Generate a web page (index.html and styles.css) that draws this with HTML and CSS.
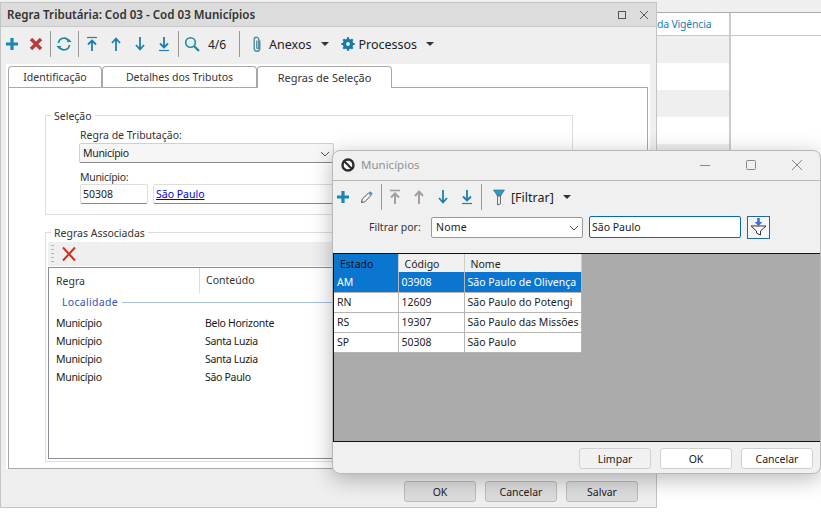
FILE: index.html
```html
<!DOCTYPE html>
<html lang="pt">
<head>
<meta charset="utf-8">
<title>Regra Tributária</title>
<link rel="stylesheet" href="styles.css">
</head>
<body>
<svg class="defs" width="0" height="0">
  <symbol id="i-plus" viewBox="0 0 14 14"><path d="M7 1v12M1 7h12" stroke="#1a86b8" stroke-width="3.200" fill="none"/></symbol>
  <symbol id="i-x" viewBox="0 0 14 14"><path d="M2 2l10 10M12 2L2 12" stroke="#b83a3a" stroke-width="3.400" fill="none"/></symbol>
  <symbol id="i-up" viewBox="0 0 14 16"><path d="M7 15V3M3 7l4-4.500 4 4.500" stroke="#1c7fae" stroke-width="1.800" fill="none"/></symbol>
  <symbol id="i-down" viewBox="0 0 14 16"><path d="M7 1v12M3 9l4 4.500 4-4.500" stroke="#1c7fae" stroke-width="1.800" fill="none"/></symbol>
  <symbol id="i-top" viewBox="0 0 14 16"><path d="M2 1.500h10" stroke="#1c7fae" stroke-width="1.200"/><path d="M7 15V5M3 8.500l4-4 4 4" stroke="#1c7fae" stroke-width="1.800" fill="none"/></symbol>
  <symbol id="i-bottom" viewBox="0 0 14 16"><path d="M2 14.500h10" stroke="#1c7fae" stroke-width="1.200"/><path d="M7 1v10M3 7.500l4 4 4-4" stroke="#1c7fae" stroke-width="1.800" fill="none"/></symbol>
  <symbol id="i-top-off" viewBox="0 0 14 16"><path d="M2 1.500h10" stroke="#a0a0a0" stroke-width="1.600"/><path d="M7 15V5M3 8.500l4-4 4 4" stroke="#a0a0a0" stroke-width="2" fill="none"/></symbol>
  <symbol id="i-up-off" viewBox="0 0 14 16"><path d="M7 15V3M3 7l4-4.500 4 4.500" stroke="#a0a0a0" stroke-width="2" fill="none"/></symbol>
</svg>

<section class="backdrop">
  <div class="strip"></div>
  <div class="table-head"><div class="col-a"><span class="col-title">da Vigência</span></div><div class="col-b"></div></div>
  <div class="table-row alt"><div class="col-a"></div><div class="col-b"></div></div>
  <div class="table-row"><div class="col-a"></div><div class="col-b"></div></div>
  <div class="table-row alt"><div class="col-a"></div><div class="col-b"></div></div>
  <div class="table-row"><div class="col-a"></div><div class="col-b"></div></div>
  <div class="table-row alt"><div class="col-a"></div><div class="col-b"></div></div>
</section>

<section class="main-window">
  <header class="main-title">
    <span class="main-title-text">Regra Tributária: Cod 03 - Cod 03 Municípios</span>
    <span class="win-controls">
      <svg width="10" height="10" viewBox="0 0 10 10"><rect x="1.500" y="1.500" width="7" height="7" fill="none" stroke="#555"/></svg>
      <svg width="10" height="10" viewBox="0 0 10 10"><path d="M1 1l8 8M9 1l-8 8" stroke="#555" fill="none"/></svg>
    </span>
  </header>
  <div class="toolbar main-toolbar">
    <svg class="ic w24" width="14" height="14"><use href="#i-plus"/></svg>
    <svg class="ic w24" width="14" height="14"><use href="#i-x"/></svg>
    <span class="sep"></span>
    <svg class="ic w26" width="16" height="16" viewBox="0 0 16 16"><path d="M2.500 7A5.500 5.500 0 0 1 13 5.500M13.500 9A5.500 5.500 0 0 1 3 10.500" stroke="#1c8a9c" stroke-width="1.700" fill="none"/><path d="M10.500 6h5l-2.500-3zM5.500 10h-5L3 13z" fill="#1c8a9c"/></svg>
    <span class="sep"></span>
    <svg class="ic w24" width="14" height="16"><use href="#i-top"/></svg>
    <svg class="ic w24" width="14" height="16"><use href="#i-up"/></svg>
    <svg class="ic w24" width="14" height="16"><use href="#i-down"/></svg>
    <svg class="ic w24" width="14" height="16"><use href="#i-bottom"/></svg>
    <span class="sep"></span>
    <svg class="ic w26" width="16" height="16" viewBox="0 0 16 16"><circle cx="6.500" cy="6.500" r="4.800" stroke="#1c8a9c" stroke-width="1.600" fill="none"/><path d="M10 10l5 5" stroke="#1c8a9c" stroke-width="2.200"/></svg>
    <span class="counter">4/6</span>
    <span class="sep"></span>
    <svg class="ic clip" width="10" height="16" viewBox="0 0 10 16"><path d="M7.800 4.500v8a2.800 2.800 0 0 1-5.600 0V3.500a2.300 2.300 0 0 1 4.600 0v8a1 1 0 0 1-2 0V4.500" stroke="#4f8f9e" stroke-width="1.400" fill="none"/></svg>
    <span class="tool-label anexos">Anexos</span>
    <span class="caret caret-anexos"></span>
    <svg class="ic gear" width="14" height="14" viewBox="0 0 14 14"><circle cx="7" cy="7" r="3.600" fill="none" stroke="#1a78aa" stroke-width="3.400"/><path d="M7 .3v2.500M7 11.200v2.500M.3 7h2.500M11.200 7h2.500M2.300 2.300l1.800 1.800M9.900 9.900l1.800 1.800M11.700 2.300L9.900 4.100M4.100 9.900l-1.800 1.800" stroke="#1a78aa" stroke-width="2.200"/></svg>
    <span class="tool-label processos">Processos</span>
    <span class="caret caret-processos"></span>
  </div>

  <div class="sheet">
    <nav class="tabs">
      <span class="tab tab-1">Identificação</span>
      <span class="tab tab-2">Detalhes dos Tributos</span>
      <span class="tab tab-3 active">Regras de Seleção</span>
    </nav>
    <div class="tab-panel">
      <fieldset class="group group-sel">
        <legend>Seleção</legend>
        <div class="field-label">Regra de Tributação:</div>
        <div class="select-main">Município<svg class="chev" width="10" height="6" viewBox="0 0 10 6"><path d="M1 1l4 4 4-4" stroke="#555" fill="none"/></svg></div>
        <div class="field-label second">Município:</div>
        <div class="inputs">
          <span class="input code">50308</span>
          <span class="input name"><a href="#">São Paulo</a></span>
        </div>
      </fieldset>
      <fieldset class="group group-rules">
        <legend>Regras Associadas</legend>
        <div class="rules-toolbar">
          <span class="grip"></span>
          <svg width="16" height="16" viewBox="0 0 16 16"><path d="M2 1.500l12 13M14 1.500l-12 13" stroke="#d4281c" stroke-width="1.900" fill="none"/></svg>
        </div>
        <div class="rules-list">
          <div class="rules-head"><span class="c1">Regra</span><span class="c2">Conteúdo</span></div>
          <div class="rules-groupline"><span>Localidade</span><i></i></div>
          <div class="rules-row"><span class="c1">Município</span><span class="c2">Belo Horizonte</span></div>
          <div class="rules-row"><span class="c1">Município</span><span class="c2">Santa Luzia</span></div>
          <div class="rules-row"><span class="c1">Município</span><span class="c2">Santa Luzia</span></div>
          <div class="rules-row"><span class="c1">Município</span><span class="c2">São Paulo</span></div>
        </div>
      </fieldset>
    </div>
  </div>

  <footer class="main-actions">
    <button class="btn disabled">OK</button>
    <button class="btn disabled">Cancelar</button>
    <button class="btn disabled">Salvar</button>
  </footer>
</section>

<section class="dialog">
  <header class="dialog-title">
    <svg class="dlg-logo" width="14" height="14" viewBox="0 0 14 14"><circle cx="7" cy="7" r="5.500" fill="#fff" stroke="#2c2c2c" stroke-width="2.400"/><path d="M3.500 3.500l7 7" stroke="#2c2c2c" stroke-width="2.200"/></svg>
    <span class="dialog-title-text">Municípios</span>
    <span class="dlg-controls">
      <svg width="12" height="12" viewBox="0 0 12 12"><path d="M1 6.500h10" stroke="#888"/></svg>
      <svg width="12" height="12" viewBox="0 0 12 12"><rect x="1.500" y="1.500" width="9" height="9" rx="1" fill="none" stroke="#888"/></svg>
      <svg width="12" height="12" viewBox="0 0 12 12"><path d="M1 1l10 10M11 1L1 11" stroke="#888" fill="none"/></svg>
    </span>
  </header>
  <div class="toolbar dlg-toolbar">
    <svg class="ic w24 first" width="14" height="14"><use href="#i-plus"/></svg>
    <svg class="ic w24" width="14" height="14" viewBox="0 0 14 14"><path d="M1.500 12.500l.8-3.400L8.500 3l2.500 2.500-6.200 6.200z" fill="#fff" stroke="#4a4a4a"/><path d="M9 2.500l1.200-1.200 2.500 2.500-1.200 1.200z" fill="#2a8fc0"/></svg>
    <span class="sep"></span>
    <svg class="ic w24" width="14" height="16"><use href="#i-top-off"/></svg>
    <svg class="ic w24" width="14" height="16"><use href="#i-up-off"/></svg>
    <svg class="ic w24" width="14" height="16"><use href="#i-down"/></svg>
    <svg class="ic w24" width="14" height="16"><use href="#i-bottom"/></svg>
    <span class="sep"></span>
    <svg class="ic funnel" width="12" height="17" viewBox="0 0 12 17"><path d="M.5 1h11L7.500 7h-3z" fill="#2a9ac8" stroke="#3a5a6a" stroke-width=".6"/><path d="M4.500 7h3v8l-3 1z" fill="#e8e8e8" stroke="#555" stroke-width=".8"/></svg>
    <span class="tool-label filtrar">[Filtrar]</span>
    <span class="caret caret-filtrar"></span>
  </div>
  <div class="filter-row">
    <span class="filter-label">Filtrar por:</span>
    <span class="filter-select">Nome<svg class="chev" width="10" height="6" viewBox="0 0 10 6"><path d="M1 1l4 4 4-4" stroke="#555" fill="none"/></svg></span>
    <span class="filter-input">São Paulo</span>
    <span class="filter-btn"><svg width="17" height="18" viewBox="0 0 17 18"><path d="M8.500 0v5" stroke="#3f6fd8" stroke-width="2.600" fill="none"/><path d="M4.500 4h8l-4 4z" fill="#3f6fd8"/><path d="M1 8h15l-5.500 5v4l-4-2v-2z" fill="#fff" stroke="#333"/></svg></span>
  </div>
  <div class="grid-wrap">
    <table class="grid">
      <thead><tr><th class="sel-head g1">Estado</th><th class="g2">Código</th><th class="g3">Nome</th></tr></thead>
      <tbody>
        <tr class="sel"><td>AM</td><td>03908</td><td>São Paulo de Olivença</td></tr>
        <tr><td>RN</td><td>12609</td><td>São Paulo do Potengi</td></tr>
        <tr><td>RS</td><td>19307</td><td>São Paulo das Missões</td></tr>
        <tr><td>SP</td><td>50308</td><td>São Paulo</td></tr>
      </tbody>
    </table>
  </div>
  <footer class="dlg-actions">
    <button class="btn flat">Limpar</button>
    <button class="btn">OK</button>
    <button class="btn">Cancelar</button>
  </footer>
</section>
</body>
</html>
```

FILE: styles.css
```css
* { box-sizing: border-box; }
html, body { margin: 0; padding: 0; }
body {
  width: 821px;
  height: 512px;
  overflow: hidden;
  position: relative;
  background: #fff;
  font-family: "Noto Sans", "Open Sans", sans-serif;
  font-size: 10.500px;
  color: #1a1a1a;
}
.defs { position: absolute; }

/* Backdrop table */
.backdrop { height: 512px; }
.strip { height: 13px; background: #efefef; border-bottom: 1px solid #aaa; }
.table-head, .table-row { display: flex; padding-left: 656px; }
.table-head { height: 23px; border-bottom: 1px solid #c8c8c8; }
.table-row { height: 27px; }
.table-row.alt { background: #efefef; }
.col-a { width: 75px; border-right: 2px solid #ccc; }
.col-b { flex: 1; background: #fff; }
.col-title { color: #1c7fae; line-height: 23px; font-size: 10.500px; letter-spacing: -.2px; white-space: nowrap; margin-left: 1px; }

/* Main window */
.main-window {
  position: absolute;
  left: 0;
  top: 2px;
  width: 657px;
  height: 506px;
  background: #efefef;
  border: 1px solid #c4c4c4;
  display: flex;
  flex-direction: column;
}
.main-title {
  height: 24px;
  flex: none;
  background: #dcdcdc;
  border-bottom: 1px solid #c8c8c8;
  display: flex;
  align-items: center;
  justify-content: space-between;
  padding: 0 7px 0 6px;
}
.main-title-text { font-weight: 600; font-size: 11.600px; color: #333; }
.win-controls { display: flex; gap: 12px; align-items: center; }

.toolbar { display: flex; align-items: center; flex: none; }
.main-toolbar { height: 34px; margin-left: -1px; }
.ic { flex: none; }
.w24 { margin: 0 5px; }
.w26 { margin: 0 4px; }
.sep { flex: none; width: 1px; height: 26px; background: #9a9a9a; margin: 0 1px 0 2px; }
.counter { font-size: 12px; margin-left: 4px; width: 29px; color: #222; }
.tool-label { font-size: 12.500px; color: #222; }
.clip { margin-left: 11px; }
.anexos { margin-left: 7px; }
.caret { flex: none; width: 0; height: 0; border-left: 4px solid transparent; border-right: 4px solid transparent; border-top: 4px solid #333; }
.caret-anexos { margin-left: 10px; }
.gear { margin-left: 12px; }
.processos { margin-left: 3px; }
.caret-processos { margin-left: 9px; }

.sheet {
  height: 405px;
  flex: none;
  margin: 3px 6px 0 5px;
  background: #fff;
  padding: 2px 0 0 2px;
  position: relative;
}
.tabs { display: flex; height: 21px; }
.tab {
  display: flex;
  align-items: center;
  justify-content: center;
  background: #fff;
  border: 1px solid #a8a8a8;
  border-bottom: none;
  border-radius: 4px 4px 0 0;
  font-size: 10.500px;
  color: #333;
  height: 21px;
}
.tab-1 { width: 94px; }
.tab-2 { width: 155px; }
.tab-3 { width: 135px; font-size: 11px; }
.tab.active { height: 22px; position: relative; z-index: 1; }
.tab-panel {
  border: 1px solid #a8a8a8;
  height: 382px;
  width: 640px;
  padding: 19px 0 0 36px;
}
.group {
  margin: 0;
  width: 528px;
  border: 1px solid #ddd;
  padding: 0;
  min-inline-size: 0;
}
.group legend { font-size: 10.500px; color: #333; padding: 2px 3px 0; line-height: 15px; }
.group-sel { height: 108px; padding: 5px 0 0 33px; }
.group-sel legend { margin-left: -28px; }
.field-label { font-size: 10.500px; color: #333; line-height: 13px; padding-left: 1px; }
.field-label.second { margin-top: 8px; letter-spacing: -.3px; }
.select-main {
  margin-top: 1px;
  width: 255px;
  height: 20px;
  background: #f6f6f6;
  border: 1px solid #d0d0d0;
  border-bottom-color: #888;
  border-radius: 2px;
  padding-left: 3px;
  line-height: 18px;
  font-size: 10.500px;
  letter-spacing: -.3px;
  position: relative;
  color: #222;
}
.chev { position: absolute; right: 3px; top: 7px; }
.inputs { display: flex; gap: 5px; margin: 0 0 0 1px; }
.input {
  height: 20px;
  background: #fff;
  border: 1px solid #ddd;
  border-bottom-color: #888;
  border-radius: 2px;
  line-height: 18px;
  font-size: 10.500px;
  padding-left: 2px;
}
.code { width: 68px; color: #222; }
.name { width: 300px; }
.name a { color: #0000dd; }
.group-rules { margin-top: 9px; height: 238px; padding: 1px 0 0 2px; }
.group-rules legend { margin-left: 3px; }
.rules-toolbar {
  height: 24px;
  margin-right: 2px;
  background: #efefef;
  display: flex;
  align-items: center;
  gap: 7px;
  padding-left: 3px;
}
.grip { width: 3px; height: 18px; background: repeating-linear-gradient(#b5b5b5 0 1.500px, transparent 1.500px 4px); }
.rules-list {
  margin-top: 1px;
  height: 192px;
  margin-right: 2px;
  border: 1px solid #8c8c96;
  background: #fff;
  font-size: 10.500px;
}
.rules-head { height: 25px; display: flex; align-items: center; color: #333; }
.c1 { width: 150px; padding-left: 7px; flex: none; }
.c2 { padding-left: 6px; }
.rules-head .c2 { border-left: 1px solid #ddd; line-height: 25px; }
.rules-groupline { display: flex; align-items: center; height: 18px; padding-left: 13px; color: #3450c0; letter-spacing: .3px; }
.rules-groupline i { flex: 1; height: 1px; background: #a9bde8; margin-left: 4px; }
.rules-row { display: flex; height: 18px; align-items: center; color: #1a1a1a; letter-spacing: -.3px; }
.rules-groupline + .rules-row { margin-top: 3px; }

.main-actions {
  flex: 1;
  display: flex;
  justify-content: flex-end;
  gap: 9px;
  padding: 12px 18px 0 0;
}
.btn {
  width: 72px;
  height: 21px;
  padding: 0;
  font-family: inherit;
  font-size: 10.500px;
  color: #222;
  background: #fff;
  border: 1px solid #d0d0d0;
  border-radius: 3px;
}
.btn.disabled { background: #dcdcdc; border-color: #bcbcbc; }
.btn.flat { background: #f1f1f1; }

/* Dialog */
.dialog {
  position: absolute;
  left: 332px;
  top: 150px;
  width: 489px;
  height: 324px;
  background: #f0f0f0;
  border: 1px solid #b9b9b9;
  border-radius: 8px;
  box-shadow: 0 5px 22px rgba(0,0,0,.28);
  display: flex;
  flex-direction: column;
}
.dialog-title {
  height: 30px;
  flex: none;
  display: flex;
  align-items: center;
  padding: 0 0 2px 8px;
  border-bottom: 1px solid #b8b8b8;
}
.dlg-logo { flex: none; }
.dialog-title-text { margin-left: 6px; color: #909090; font-size: 11.500px; }
.dlg-controls { margin-left: auto; display: flex; gap: 34px; padding-right: 17px; }
.dlg-toolbar { height: 30px; margin-top: 1px; }
.first { margin-left: 3px; }
.funnel { margin-left: 10px; }
.filtrar { margin-left: 6px; }
.caret-filtrar { margin-left: 9px; }
.filter-row { display: flex; align-items: center; height: 24px; margin-top: 3px; padding-left: 36px; }
.filter-label { width: 62px; color: #333; font-size: 10.500px; }
.filter-select {
  width: 152px;
  height: 21px;
  background: #fff;
  border: 1px solid #999;
  border-radius: 2px;
  line-height: 19px;
  padding-left: 4px;
  font-size: 10.500px;
  position: relative;
  letter-spacing: .2px;
}
.filter-input {
  width: 152px;
  height: 22px;
  margin-left: 6px;
  background: #fff;
  border: 1px solid #0a67b0;
  border-radius: 2px;
  line-height: 20px;
  padding-left: 2px;
  font-size: 10.500px;
}
.filter-btn {
  width: 23px;
  height: 23px;
  margin-left: 6px;
  border: 1px solid #26679c;
  background: #f4f6fa;
  display: flex;
  align-items: center;
  justify-content: center;
}
.grid-wrap {
  height: 189px;
  flex: none;
  margin-top: 14px;
  background: #ababab;
  border: 1px solid #111;
  border-right: none;
}
.grid { border-collapse: collapse; table-layout: fixed; width: 247px; font-size: 10.500px; background: #fff; }
.g1 { width: 64px; }
.g2 { width: 66px; }
.g3 { width: 117px; }
.grid th {
  height: 18px;
  padding: 1px 0 0 6px;
  text-align: left;
  font-weight: 400;
  background: #f0f0f0;
  border-right: 1px solid #ccc;
  color: #222;
}
.grid th.sel-head { background: #0a76d0; color: #111; }
.grid td {
  height: 20px;
  padding: 0 0 0 3px;
  border-right: 1px solid #b5b5b5;
  border-bottom: 1px solid #b5b5b5;
  color: #222;
  white-space: nowrap;
  overflow: hidden;
}
.grid tr.sel td { background: #0a76d0; color: #fff; }
.dlg-actions {
  display: flex;
  gap: 9px;
  justify-content: flex-end;
  padding: 6px 7px 0 0;
}
```
